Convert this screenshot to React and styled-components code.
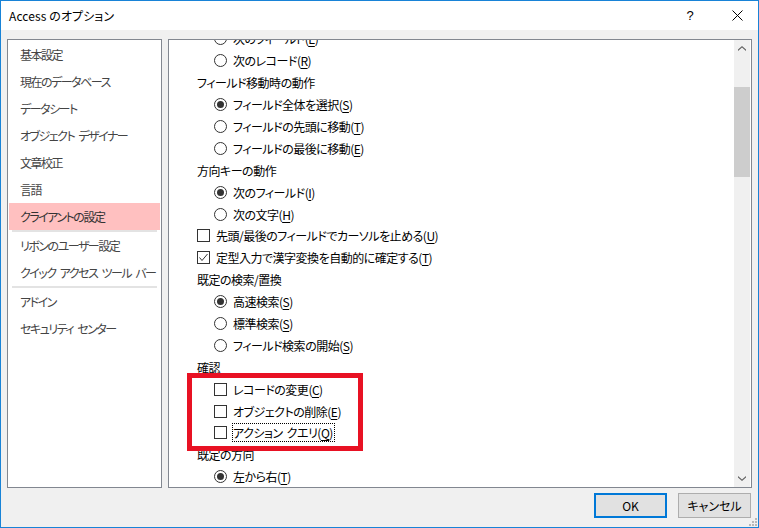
import React from 'react'
import styled, { createGlobalStyle } from 'styled-components'

const Global = createGlobalStyle`
	html, body {
		margin: 0;
		padding: 0;
		background: #fff;
	}
	body {
		font-family: "Noto Sans CJK JP", "Noto Sans", sans-serif;
		font-size: 12px;
		font-feature-settings: "palt";
		color: #000;
	}
`

const Window = styled.div`
	width: 759px;
	height: 528px;
	box-sizing: border-box;
	border: 1px solid #1883d7;
	display: flex;
	flex-direction: column;
	background: #fff;
`

const TitleBar = styled.div`
	height: 29px;
	display: flex;
	align-items: center;
	padding-left: 8px;
	background: #fff;
`

const Title = styled.div`
	flex: 1;
	font-size: 12px;
	letter-spacing: 0.1px;
`

const TitleControls = styled.div`
	display: flex;
	gap: 17px;
	margin-right: 6px;
`

const TitleButton = styled.div`
	width: 30px;
	height: 22px;
	display: flex;
	align-items: center;
	justify-content: center;
	font-family: "Liberation Sans", sans-serif;
	font-size: 13px;
`

const Body = styled.div`
	flex: 1;
	background: #f0f0f0;
	padding: 9px 6px 0 6px;
	display: flex;
	flex-direction: column;
	position: relative;
`

const Panels = styled.div`
	display: flex;
	gap: 6px;
	height: 449px;
`

const Nav = styled.div`
	width: 155px;
	box-sizing: border-box;
	border: 1px solid #828790;
	background: #fff;
	padding-top: 1px;
`

const NavItem = styled.div`
	height: 27px;
	margin: 0 1px;
	padding-left: 11px;
	display: flex;
	align-items: center;
	letter-spacing: -1.5px;
	word-spacing: 3px;
	color: ${p => (p.$active ? '#333' : '#444')};
	background: ${p => (p.$active ? '#ffc0c0' : 'transparent')};
	white-space: pre;
`

const NavSeparator = styled.div`
	height: 2px;
	margin: 0 4px;
	background: #e3e3e3;
`

const Content = styled.div`
	flex: 1;
	box-sizing: border-box;
	border: 1px solid #828790;
	background: #fff;
	display: flex;
	overflow: hidden;
`

const Scroller = styled.div`
	flex: 1;
	overflow: hidden;
	padding-left: 28px;
`

const List = styled.div`
	margin-top: -12px;
	letter-spacing: -0.5px;
	word-spacing: 2px;
`

const Row = styled.div`
	height: 21.9px;
	display: flex;
	align-items: center;
	padding-left: ${p => (p.$indent ? 17 : 0)}px;
	white-space: pre;
`

const Radio = styled.span`
	width: 13px;
	height: 13px;
	box-sizing: border-box;
	border: 1px solid #333;
	border-radius: 50%;
	margin-right: 6px;
	display: flex;
	align-items: center;
	justify-content: center;
	flex-shrink: 0;

	&::after {
		content: '';
		width: 7px;
		height: 7px;
		border-radius: 50%;
		background: ${p => (p.$on ? '#333' : 'transparent')};
	}
`

const Box = styled.span`
	width: 13px;
	height: 13px;
	box-sizing: border-box;
	border: 1px solid #333;
	margin-right: 6px;
	display: flex;
	align-items: center;
	justify-content: center;
	flex-shrink: 0;
	background: #fff;
`

const Key = styled.u`
	text-decoration: underline;
	text-underline-offset: 2px;
`

const Focus = styled.span`
	border: 1px dotted #000;
	margin-left: -1px;
	padding: 0 1px 0 0;
	line-height: 16px;
`

const Confirm = styled.div`
	position: relative;

	&::after {
		content: '';
		position: absolute;
		top: -5px;
		bottom: -7px;
		left: -10px;
		width: 176px;
		box-sizing: border-box;
		border: 5px solid #e81123;
		pointer-events: none;
	}
`

const Scrollbar = styled.div`
	width: 16px;
	margin-right: 1px;
	background: #f0f0f0;
	display: flex;
	flex-direction: column;
`

const Arrow = styled.div`
	height: 17px;
	display: flex;
	align-items: center;
	justify-content: center;
`

const Thumb = styled.div`
	margin-top: 30px;
	height: 90px;
	background: #cdcdcd;
`

const Track = styled.div`
	flex: 1;
`

const Footer = styled.div`
	display: flex;
	justify-content: flex-end;
	gap: 11px;
	padding: 5px 1px 0 0;
`

const Button = styled.div`
	width: 73px;
	height: 25px;
	box-sizing: border-box;
	border: ${p => (p.$primary ? '2px solid #0078d7' : '1px solid #adadad')};
	background: #e1e1e1;
	display: flex;
	align-items: center;
	justify-content: center;
	font-size: 12px;
`

const Grip = styled.svg`
	position: absolute;
	right: 1px;
	bottom: 1px;
`

const Check = () => (
	<svg width="11" height="11" viewBox="0 0 11 11">
		<polyline points="1.5,5.5 4,8.5 9.5,2" fill="none" stroke="#333" strokeWidth="1" />
	</svg>
)

const Chevron = ({ down }) => (
	<svg width="8" height="5" viewBox="0 0 8 5">
		<polygon
			points={down ? '0,0 4,3.5 8,0 8,1.5 4,5 0,1.5' : '0,5 4,1.5 8,5 8,3.5 4,0 0,3.5'}
			fill="#606060"
		/>
	</svg>
)

const RadioRow = ({ on, children }) => (
	<Row $indent>
		<Radio $on={on} />
		<span>{children}</span>
	</Row>
)

const CheckRow = ({ on, indent, children }) => (
	<Row $indent={indent}>
		<Box>{on && <Check />}</Box>
		<span>{children}</span>
	</Row>
)

const label = (text, key) => (
	<>
		{text}(<Key>{key}</Key>)
	</>
)

const navItems = [
	['基本設定'],
	['現在のデータベース'],
	['データシート'],
	['オブジェクト デザイナー'],
	['文章校正'],
	['言語'],
	['クライアントの設定', true, true],
	['リボンのユーザー設定'],
	['クイック アクセス ツール バー', false, true],
	['アドイン'],
	['セキュリティ センター'],
]

const App = () => (
	<Window>
		<Global />
		<TitleBar>
			<Title>Access のオプション</Title>
			<TitleControls>
				<TitleButton>?</TitleButton>
				<TitleButton>
					<svg width="11" height="11" viewBox="0 0 11 11">
						<path d="M0.5 0.5 L10.5 10.5 M10.5 0.5 L0.5 10.5" stroke="#000" strokeWidth="1" />
					</svg>
				</TitleButton>
			</TitleControls>
		</TitleBar>
		<Body>
			<Panels>
				<Nav>
					{navItems.map(([name, active, sep]) => (
						<React.Fragment key={name}>
							<NavItem $active={active}>{name}</NavItem>
							{sep && <NavSeparator />}
						</React.Fragment>
					))}
				</Nav>
				<Content>
					<Scroller>
						<List>
							<RadioRow>{label('次のフィールド', 'E')}</RadioRow>
							<RadioRow>{label('次のレコード', 'R')}</RadioRow>
							<Row>フィールド移動時の動作</Row>
							<RadioRow on>{label('フィールド全体を選択', 'S')}</RadioRow>
							<RadioRow>{label('フィールドの先頭に移動', 'T')}</RadioRow>
							<RadioRow>{label('フィールドの最後に移動', 'E')}</RadioRow>
							<Row>方向キーの動作</Row>
							<RadioRow on>{label('次のフィールド', 'I')}</RadioRow>
							<RadioRow>{label('次の文字', 'H')}</RadioRow>
							<CheckRow>{label('先頭/最後のフィールドでカーソルを止める', 'U')}</CheckRow>
							<CheckRow on>{label('定型入力で漢字変換を自動的に確定する', 'T')}</CheckRow>
							<Row>既定の検索/置換</Row>
							<RadioRow on>{label('高速検索', 'S')}</RadioRow>
							<RadioRow>{label('標準検索', 'S')}</RadioRow>
							<RadioRow>{label('フィールド検索の開始', 'S')}</RadioRow>
							<Row>確認</Row>
							<Confirm>
								<CheckRow indent>{label('レコードの変更', 'C')}</CheckRow>
								<CheckRow indent>{label('オブジェクトの削除', 'E')}</CheckRow>
								<CheckRow indent>
									<Focus>{label('アクション クエリ', 'Q')}</Focus>
								</CheckRow>
							</Confirm>
							<Row>既定の方向</Row>
							<RadioRow on>{label('左から右', 'T')}</RadioRow>
						</List>
					</Scroller>
					<Scrollbar>
						<Arrow><Chevron /></Arrow>
						<Thumb />
						<Track />
						<Arrow><Chevron down /></Arrow>
					</Scrollbar>
				</Content>
			</Panels>
			<Footer>
				<Button $primary>OK</Button>
				<Button>キャンセル</Button>
			</Footer>
			<Grip width="8" height="8" viewBox="0 0 8 8">
				<rect x="6" y="0" width="2" height="2" fill="#b8b8b8" />
				<rect x="3" y="3" width="2" height="2" fill="#b8b8b8" />
				<rect x="6" y="3" width="2" height="2" fill="#b8b8b8" />
				<rect x="0" y="6" width="2" height="2" fill="#b8b8b8" />
				<rect x="3" y="6" width="2" height="2" fill="#b8b8b8" />
				<rect x="6" y="6" width="2" height="2" fill="#b8b8b8" />
			</Grip>
		</Body>
	</Window>
)

export default App
